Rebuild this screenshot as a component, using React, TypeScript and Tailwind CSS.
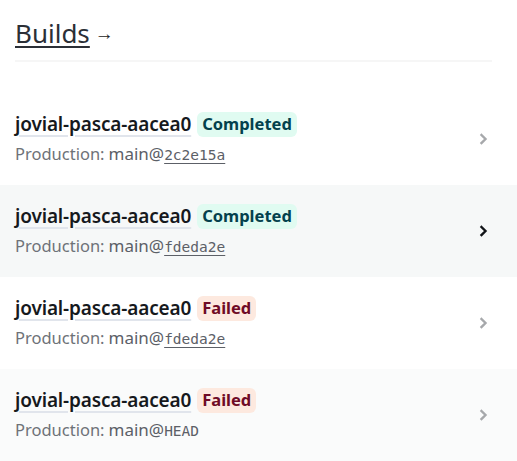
import React from "react";

type Build = { status: "Completed" | "Failed"; ref: string; hover?: boolean; bg: string };

const builds: Build[] = [
  { status: "Completed", ref: "2c2e15a", bg: "bg-white" },
  { status: "Completed", ref: "fdeda2e", hover: true, bg: "bg-[#f6f8f8]" },
  { status: "Failed", ref: "fdeda2e", bg: "bg-white" },
  { status: "Failed", ref: "HEAD", bg: "bg-[#fafbfb]" },
];

function Chevron({ dark }: { dark?: boolean }) {
  return (
    <svg width="10" height="12" viewBox="0 0 10 12" fill="none">
      <path
        d="M2.5 2 L6.5 6 L2.5 10"
        stroke={dark ? "#111418" : "#a6a8ab"}
        strokeWidth="2.4"
        strokeLinecap="square"
        strokeLinejoin="miter"
      />
    </svg>
  );
}

export default function App() {
  return (
    <div className="w-[517px] h-[461px] bg-white overflow-hidden font-['Noto_Sans',sans-serif]">
      <div className="pl-[15px] pr-[25px] pt-[14px]">
        <div className="flex items-baseline h-[38px]">
          <span className="text-[26px] leading-[38px] text-[#2b2f36] underline decoration-[2px] underline-offset-[3px] decoration-[#2b2f36]">
            Builds
          </span>
          <span className="ml-[5px] text-[19px] leading-[20px] text-[#222] relative top-[-3px]">→</span>
        </div>
        <div className="mt-[8px] h-[2px] bg-[#f6f6f6]" />
      </div>
      <div className="mt-[31px]">
        {builds.map((b, i) => (
          <div key={i} className={`${b.bg} h-[92px] flex items-center pl-[15px] pr-[28px]`}>
            <div className="flex-1 flex flex-col">
              <div className="flex items-center h-[26px] mt-[-2px]">
                <span className="text-[19px] font-semibold text-[#16191d] underline decoration-[#e1e5ec] decoration-[2px] underline-offset-[4px] tracking-[-0.15px]">
                  jovial-pasca-aacea0
                </span>
                {b.status === "Completed" ? (
                  <span className="ml-[6px] px-[5px] h-[25px] flex items-center rounded-[6px] bg-[#e0fbf1] text-[#04414d] text-[16.5px] font-bold">
                    Completed
                  </span>
                ) : (
                  <span className="ml-[6px] px-[5px] h-[25px] flex items-center rounded-[6px] bg-[#fde9df] text-[#6f0b26] text-[16.5px] font-bold">
                    Failed
                  </span>
                )}
              </div>
              <div className="flex items-baseline mt-[4px] h-[24px]">
                <span className="text-[16.5px] text-[#6e7278]">Production:</span>
                <span className="ml-[4px] text-[17px] text-[#5c6067]">main@</span>
                {b.ref === "HEAD" ? (
                  <span className="text-[14.5px] font-['DejaVu_Sans_Mono',monospace] text-[#5c6067]">HEAD</span>
                ) : (
                  <span className="text-[14.5px] font-['DejaVu_Sans_Mono',monospace] text-[#5c6067] underline underline-offset-[3px]">
                    {b.ref}
                  </span>
                )}
              </div>
            </div>
            <Chevron dark={b.hover} />
          </div>
        ))}
      </div>
    </div>
  );
}
